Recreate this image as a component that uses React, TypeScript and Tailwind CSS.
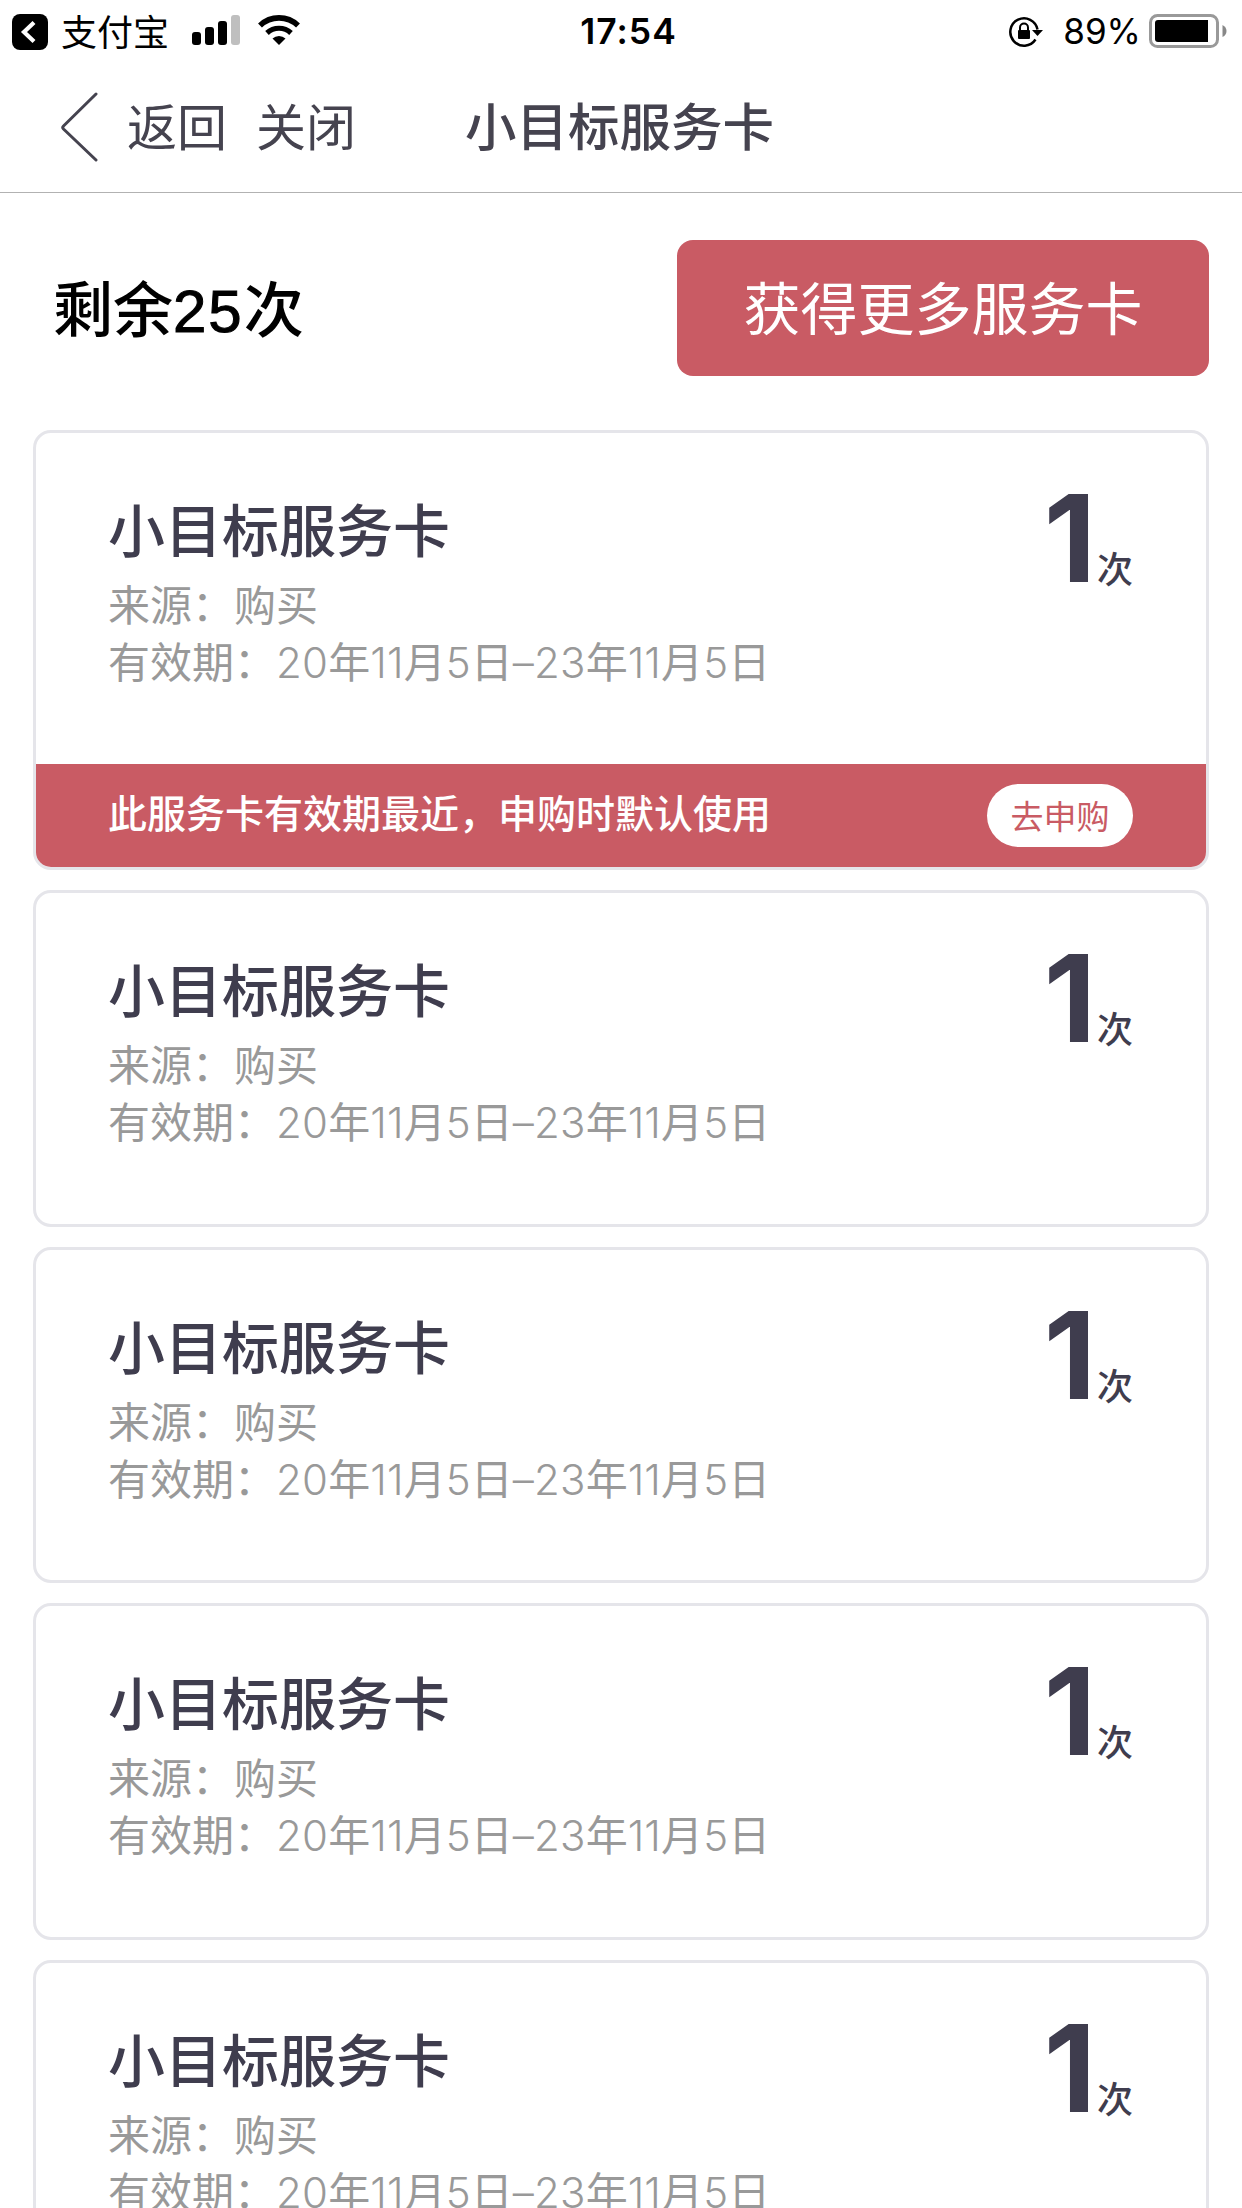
const PERIOD = ['20', '年', '11', '月', '5', '日', '–', '23', '年', '11', '月', '5', '日'];

const CARDS = [
  { id: 1, title: '小目标服务卡', source: '购买', period: PERIOD, count: 1, nearest: true },
  { id: 2, title: '小目标服务卡', source: '购买', period: PERIOD, count: 1, nearest: false },
  { id: 3, title: '小目标服务卡', source: '购买', period: PERIOD, count: 1, nearest: false },
  { id: 4, title: '小目标服务卡', source: '购买', period: PERIOD, count: 1, nearest: false },
  { id: 5, title: '小目标服务卡', source: '购买', period: PERIOD, count: 1, nearest: false },
];

type Card = (typeof CARDS)[number];

function StatusBar() {
  return (
    <div className="grid h-16 grid-cols-3 items-center pl-3 pr-[15px] text-black">
      <div className="flex items-center">
        <svg width="36" height="36" viewBox="0 0 36 36">
          <rect width="36" height="36" rx="8" fill="#000" />
          <path d="M22 8.5 12 18l10 9.5" fill="none" stroke="#fff" strokeWidth="4.2" />
        </svg>
        <span className="ml-[13px] pb-1 text-[36px] leading-none">支付宝</span>
        <svg className="ml-[23px] mb-1" width="48" height="30" viewBox="0 0 48 30">
          <rect y="17" width="9" height="13" rx="3" />
          <rect x="13" y="12" width="9" height="18" rx="3" />
          <rect x="26" y="6" width="9" height="24" rx="3" />
          <rect x="39" width="9" height="30" rx="3" fill="#bfbfbf" />
        </svg>
        <svg className="ml-[18px] mb-1" width="42" height="30" viewBox="0 0 42 30">
          <path d="M2 10.5a27.5 27.5 0 0 1 38 0" fill="none" stroke="#000" strokeWidth="5.6" />
          <path d="M9 18a17.5 17.5 0 0 1 24 0" fill="none" stroke="#000" strokeWidth="5.2" />
          <path d="M14.5 23.5a9.5 9.5 0 0 1 13 0L21 30z" />
        </svg>
      </div>
      <div className="pl-[18px] text-center font-[Inter] text-[35.5px] font-semibold leading-none tracking-[1px]">
        17:54
      </div>
      <div className="flex items-center justify-end pb-0.5">
        <svg width="34" height="31" viewBox="0 0 34 31">
          <path d="M26.5 23.5a13.7 13.7 0 1 1 2-10" fill="none" stroke="#000" strokeWidth="2.5" />
          <path d="M23 14h11l-5.5 6z" />
          <rect x="9" y="14" width="12" height="9" rx="1" />
          <path d="M11 14.5v-3a4 4 0 0 1 8 0v3" fill="none" stroke="#000" strokeWidth="2" />
        </svg>
        <span className="ml-5 font-[Inter] text-[35px] leading-none">89%</span>
        <svg className="ml-2" width="78" height="34" viewBox="0 0 78 34">
          <rect x="1.5" y="1.5" width="67" height="31" rx="7" fill="none" stroke="#999" strokeWidth="3" />
          <path d="M6 9q0-3 3-3h50v22H9q-3 0-3-3z" />
          <path d="M73.5 11q4 2 4 6t-4 6z" fill="#888" />
        </svg>
      </div>
    </div>
  );
}

function NavBar() {
  return (
    <div className="flex h-[129px] items-center border-b border-[#b2b2b2] pb-[3px] text-[#45434f]">
      <svg className="ml-[60px]" width="40" height="74" viewBox="0 0 40 74">
        <path d="M36 4 3.5 36q-1.5 1.5 0 3L36 70" fill="none" stroke="#45434f" strokeWidth="3" strokeLinecap="round" />
      </svg>
      <span className="ml-[27px] pb-[6px] text-[50px] leading-none">返回</span>
      <span className="ml-[29px] pb-[6px] text-[50px] leading-none">关闭</span>
      <h1 className="ml-[109px] pb-[5px] text-[51.5px] font-medium leading-none">小目标服务卡</h1>
    </div>
  );
}

function ServiceCard({ card }: { card: Card }) {
  return (
    <div className="overflow-hidden rounded-[18px] border-[3px] border-[#e5e5ea]">
      <div className="flex h-[330.67px] justify-between pl-[72px] pr-[73px]">
        <div className="pt-[56px]">
          <h2 className="mb-[9px] text-[57px] font-medium leading-[76px] text-[#3f3d4e]">{card.title}</h2>
          <p className="text-[42px] leading-[57px] text-[#999]">来源：{card.source}</p>
          <p className="whitespace-nowrap text-[42px] leading-[57px] text-[#999]">
            有效期：
            {card.period.map((part, i) => (
              <span key={i} className={/\d|–/.test(part) ? 'font-[Inter] font-[350] tracking-[0.2px]' : ''}>
                {part}
              </span>
            ))}
          </p>
        </div>
        <div className="flex h-[154px] items-baseline pt-[45px] text-[#3f3d4e]">
          <span className="mr-px font-[Inter] text-[121px] font-[650] leading-[121px]">{card.count}</span>
          <span className="relative top-px text-[36px] font-medium leading-none">次</span>
        </div>
      </div>
      {card.nearest && (
        <div className="flex h-[103.33px] items-center justify-between bg-[#c95b64] pl-[72px] pr-[73px]">
          <span className="pb-[7px] text-[39px] font-medium leading-none text-white">此服务卡有效期最近，申购时默认使用</span>
          <button className="h-[63px] w-[146px] rounded-full bg-white text-[33px] leading-none text-[#c95b64]">去申购</button>
        </div>
      )}
    </div>
  );
}

export default function App() {
  return (
    <div className="h-[2208px] w-[1242px] overflow-hidden bg-white font-['Noto_Sans_CJK_SC',sans-serif]">
      <StatusBar />
      <NavBar />
      <div className="flex h-[237px] items-center justify-between pb-[7px] pl-[53px] pr-[33px]">
        <p className="pt-0.5 text-[60px] font-medium leading-none text-black">
          剩余
          <span className="font-['Liberation_Sans'] tracking-[2px] [-webkit-text-stroke:1px_black]">25</span>次
        </p>
        <button className="h-[136px] w-[532px] rounded-2xl bg-[#c95b64] pb-[6px] text-[57px] leading-none text-white">
          获得更多服务卡
        </button>
      </div>
      <div className="flex flex-col gap-5 px-[33px]">
        {CARDS.map((card) => (
          <ServiceCard key={card.id} card={card} />
        ))}
      </div>
    </div>
  );
}
